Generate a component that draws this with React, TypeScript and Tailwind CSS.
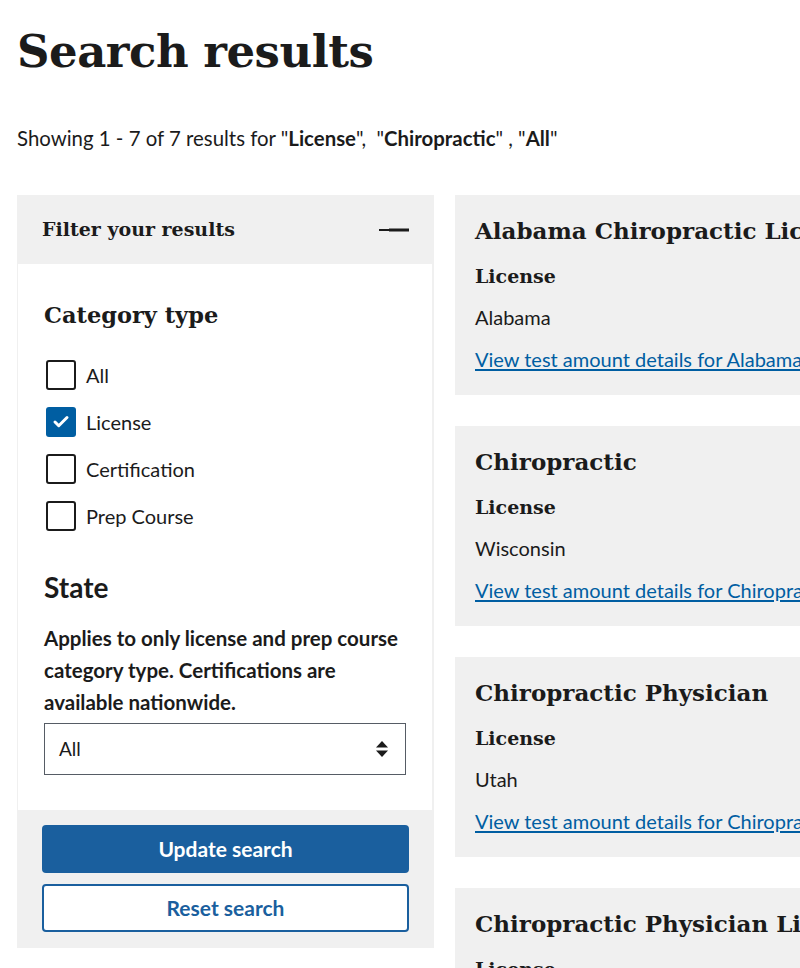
import { Check } from 'lucide-react'

const serif = { fontFamily: '"DejaVu Serif", "Liberation Serif", serif' }

interface ResultCardProps {
  title: string
  category: string
  state: string
  linkText: string
}

function ResultCard({ title, category, state, linkText }: ResultCardProps) {
  return (
    <div className="bg-[#f0f0f0] h-[200px] px-5 pt-[22px] whitespace-nowrap">
      <h3 className="text-[23px] font-bold leading-[28px] text-[#1b1b1b]" style={serif}>
        {title}
      </h3>
      <p className="mt-[19px] text-[19px] font-bold leading-[24px] text-[#1b1b1b]" style={serif}>
        {category}
      </p>
      <p className="mt-[17px] text-[20px] leading-[24px] text-[#1b1b1b]">{state}</p>
      <a href="#" className="block mt-[18px] text-[20px] leading-[24px] text-[#005ea2] underline underline-offset-2">
        {linkText}
      </a>
    </div>
  )
}

function CheckRow({ label, checked }: { label: string; checked?: boolean }) {
  return (
    <label className="flex items-center gap-[10px] h-[30px]">
      {checked ? (
        <span className="w-[30px] h-[30px] rounded-[3px] bg-[#005ea2] flex items-center justify-center">
          <Check className="w-[18px] h-[18px] text-white" strokeWidth={4} />
        </span>
      ) : (
        <span className="w-[30px] h-[30px] rounded-[3px] border-2 border-[#1b1b1b] bg-white" />
      )}
      <span className="text-[20px] text-[#1b1b1b]">{label}</span>
    </label>
  )
}

export default function App() {
  const results = [
    { title: 'Alabama Chiropractic License', state: 'Alabama', linkText: 'View test amount details for Alabama Chiropractic License' },
    { title: 'Chiropractic', state: 'Wisconsin', linkText: 'View test amount details for Chiropractic' },
    { title: 'Chiropractic Physician', state: 'Utah', linkText: 'View test amount details for Chiropractic Physician' },
    { title: 'Chiropractic Physician License', state: 'Idaho', linkText: 'View test amount details for Chiropractic Physician License' },
  ]

  return (
    <div
      className="w-[800px] h-[968px] overflow-hidden bg-white text-[#1b1b1b]"
      style={{ fontFamily: 'Lato, "Liberation Sans", sans-serif' }}
    >
      <div className="pl-[17px] pt-[24px]">
        {/* Header */}
        <h1 className="text-[45px] font-bold leading-[56px] tracking-[-0.5px]" style={serif}>
          Search results
        </h1>
        <p className="mt-[46px] text-[20.4px] leading-[24px] whitespace-nowrap">
          Showing 1 - 7 of 7 results for "<b>License</b>",&nbsp; "<b>Chiropractic</b>" , "<b>All</b>"
        </p>

        <div className="flex gap-[21px] items-start mt-[45px]">
          {/* Filter sidebar */}
          <aside className="w-[417px] shrink-0 bg-[#f0f0f0] pb-[16px]">
            <div className="h-[69px] flex items-center justify-between pl-[25px] pr-[25px]">
              <h2 className="text-[19px] font-bold" style={serif}>
                Filter your results
              </h2>
              <svg width="30" height="6" viewBox="0 0 30 6">
                <rect x="0" y="2" width="30" height="2" fill="#1b1b1b" />
                <rect x="10" y="1.5" width="20" height="3" fill="#1b1b1b" />
              </svg>
            </div>
            <div className="bg-white ml-[1px] mr-[2px] px-[26px] pt-[37px] pb-[35px]">
              <h3 className="text-[22.5px] font-bold leading-[28px]" style={serif}>
                Category type
              </h3>
              <div className="mt-[31px] flex flex-col gap-[17px] pl-[2px]">
                <CheckRow label="All" />
                <CheckRow label="License" checked />
                <CheckRow label="Certification" />
                <CheckRow label="Prep Course" />
              </div>
              <h3 className="mt-[40px] text-[28px] font-bold leading-[32px]">State</h3>
              <p className="mt-[19px] text-[20.5px] font-bold leading-[32px]">
                Applies to only license and prep course category type. Certifications are available nationwide.
              </p>
              <div className="mt-[5px] h-[52px] border border-[#565c65] flex items-center justify-between pl-[14px] pr-[16px]">
                <span className="text-[19px]">All</span>
                <svg width="14" height="20" viewBox="0 0 14 20">
                  <path d="M7 2 L13 8.5 H1 Z" fill="#1b1b1b" />
                  <path d="M7 18 L13 11.5 H1 Z" fill="#1b1b1b" />
                </svg>
              </div>
            </div>
            <div className="px-[25px] pt-[15px] flex flex-col gap-[11px]">
              <button className="h-[48px] w-full rounded-[4px] bg-[#1a5f9e] text-white text-[21px] font-bold">
                Update search
              </button>
              <button className="h-[48px] w-full rounded-[4px] bg-white border-2 border-[#1a5f9e] text-[#1a5f9e] text-[21px] font-bold">
                Reset search
              </button>
            </div>
          </aside>

          {/* Results */}
          <div className="w-[560px] shrink-0 flex flex-col gap-[31px]">
            {results.map((r) => (
              <ResultCard key={r.title} title={r.title} category="License" state={r.state} linkText={r.linkText} />
            ))}
          </div>
        </div>
      </div>
    </div>
  )
}
